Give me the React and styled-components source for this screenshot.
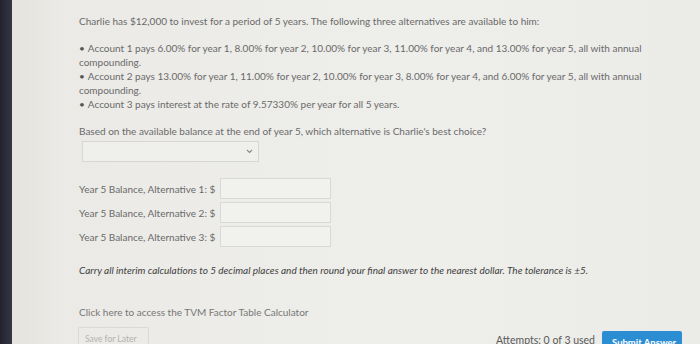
import styled, { createGlobalStyle } from "styled-components";

const Global = createGlobalStyle`
  html, body {
    margin: 0;
    padding: 0;
    width: 700px;
    height: 344px;
    overflow: hidden;
    background: #e9e8e4;
    font-family: Lato, "Open Sans", sans-serif;
  }
`;

const Frame = styled.div`
  display: flex;
  width: 700px;
  height: 344px;
  overflow: hidden;
`;

const Bezel = styled.div`
  width: 12px;
  flex-shrink: 0;
  background: linear-gradient(90deg, #23232d, #353646);
`;

const Screen = styled.div`
  flex: 1;
  display: flex;
  background: linear-gradient(90deg, #e4e3de 0px, #ebeae6 50px, #eeeeea 400px, #ebebe8 100%);
`;

const Content = styled.div`
  flex: 1;
  padding: 14px 18px 0 67px;
  color: #6a6a6a;
  font-size: 10px;
  line-height: 14px;
`;

const Para = styled.p`
  margin: 0 0 ${(p) => p.$after || 0}px;
`;

const List = styled.div`
  margin: 0 0 13px;
`;

const Bullet = styled.div`
  &::before {
    content: "•";
    margin-right: 3px;
    color: #555;
  }
`;

const Select = styled.div`
  width: 177px;
  height: 21px;
  margin: 3px 0 0 3px;
  border: 1px solid #d6d6d2;
  background: #efefec;
  display: flex;
  align-items: center;
  justify-content: flex-end;
  padding-right: 5px;
  box-sizing: border-box;
`;

const Rows = styled.div`
  display: flex;
  flex-direction: column;
  gap: 3px;
  margin-top: 16px;
`;

const Row = styled.div`
  display: flex;
  align-items: center;
  gap: 5px;
`;

const Label = styled.span`
  white-space: nowrap;
`;

const Input = styled.div`
  width: 111px;
  height: 21px;
  border: 1px solid #d8d8d4;
  background: #f1f1ee;
  box-sizing: border-box;
`;

const Note = styled.p`
  margin: 16px 0 0;
  font-style: italic;
  color: #3f3f3f;
`;

const Link = styled.p`
  margin: 28px 0 0;
  color: #777;
`;

const Footer = styled.div`
  display: flex;
  align-items: flex-start;
  margin-top: 8px;
`;

const SaveButton = styled.div`
  width: 71px;
  height: 24px;
  margin-left: -1px;
  border: 1px solid #d9d9d5;
  border-radius: 2px;
  box-sizing: border-box;
  color: #b3b3b0;
  font-size: 8.5px;
  white-space: nowrap;
  padding: 4px 0 0 6px;
`;

const Attempts = styled.span`
  margin-left: auto;
  margin-top: 6px;
  font-size: 10.5px;
  color: #5a5a5a;
  white-space: nowrap;
`;

const Submit = styled.div`
  width: 80px;
  height: 24px;
  margin: 4px 0 0 7px;
  border-radius: 2px;
  background: #2b8ed3;
  color: #fff;
  font-size: 9.5px;
  font-weight: 700;
  white-space: nowrap;
  overflow: hidden;
  padding: 5px 0 0 10px;
  box-sizing: border-box;
`;

export default function App() {
  return (
    <Frame>
      <Global />
      <Bezel />
      <Screen>
        <Content>
          <Para $after={13}>
            Charlie has $12,000 to invest for a period of 5 years. The following three alternatives are available to him:
          </Para>
          <List>
            <Bullet>
              Account 1 pays 6.00% for year 1, 8.00% for year 2, 10.00% for year 3, 11.00% for year 4, and 13.00% for year 5, all with annual compounding.
            </Bullet>
            <Bullet>
              Account 2 pays 13.00% for year 1, 11.00% for year 2, 10.00% for year 3, 8.00% for year 4, and 6.00% for year 5, all with annual compounding.
            </Bullet>
            <Bullet>Account 3 pays interest at the rate of 9.57330% per year for all 5 years.</Bullet>
          </List>
          <Para>Based on the available balance at the end of year 5, which alternative is Charlie's best choice?</Para>
          <Select>
            <svg width="7" height="5" viewBox="0 0 7 5">
              <path d="M1 1l2.5 2.5L6 1" fill="none" stroke="#888" strokeWidth="1.1" />
            </svg>
          </Select>
          <Rows>
            {[1, 2, 3].map((n) => (
              <Row key={n}>
                <Label>Year 5 Balance, Alternative {n}: $</Label>
                <Input />
              </Row>
            ))}
          </Rows>
          <Note>
            Carry all interim calculations to 5 decimal places and then round your final answer to the nearest dollar. The tolerance is ±5.
          </Note>
          <Link>Click here to access the TVM Factor Table Calculator</Link>
          <Footer>
            <SaveButton>Save for Later</SaveButton>
            <Attempts>Attempts: 0 of 3 used</Attempts>
            <Submit>Submit Answer</Submit>
          </Footer>
        </Content>
      </Screen>
    </Frame>
  );
}
